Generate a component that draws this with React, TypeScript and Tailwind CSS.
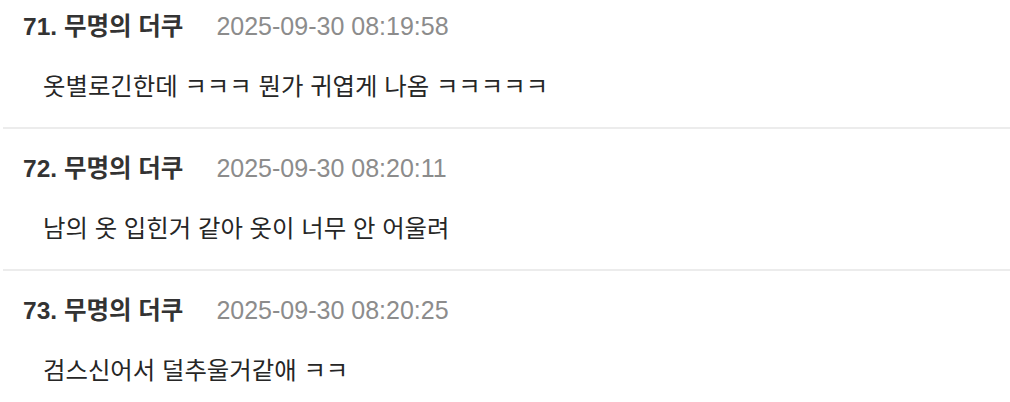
const comments = [
  { no: 71, name: '무명의 더쿠', date: '2025-09-30 08:19:58', text: '옷별로긴한데 ㅋㅋㅋ 뭔가 귀엽게 나옴 ㅋㅋㅋㅋㅋ' },
  { no: 72, name: '무명의 더쿠', date: '2025-09-30 08:20:11', text: '남의 옷 입힌거 같아 옷이 너무 안 어울려' },
  { no: 73, name: '무명의 더쿠', date: '2025-09-30 08:20:25', text: '검스신어서 덜추울거같애 ㅋㅋ' },
];

export default function App() {
  return (
    <div
      className="min-h-screen bg-white overflow-hidden"
      style={{ fontFamily: '"Liberation Sans", "Noto Sans CJK KR", sans-serif' }}
    >
      <ul className="-mt-[13px] ml-[3px]">
        {comments.map((c) => (
          <li key={c.no} className="border-b-2 border-[#ececec] pt-[26px] pb-[26px]">
            <div className="flex items-center pl-[20px] h-[28px] whitespace-nowrap">
              <span className="text-[24.5px] font-bold text-[#333333]">
                {c.no}. {c.name}
              </span>
              <span className="ml-[33px] text-[25px] text-[#8c8c8c]">{c.date}</span>
            </div>
            <p className="mt-[32px] pl-[40px] h-[28px] leading-[28px] text-[24.4px] text-[#262626] whitespace-nowrap">
              {c.text}
            </p>
          </li>
        ))}
      </ul>
    </div>
  );
}
